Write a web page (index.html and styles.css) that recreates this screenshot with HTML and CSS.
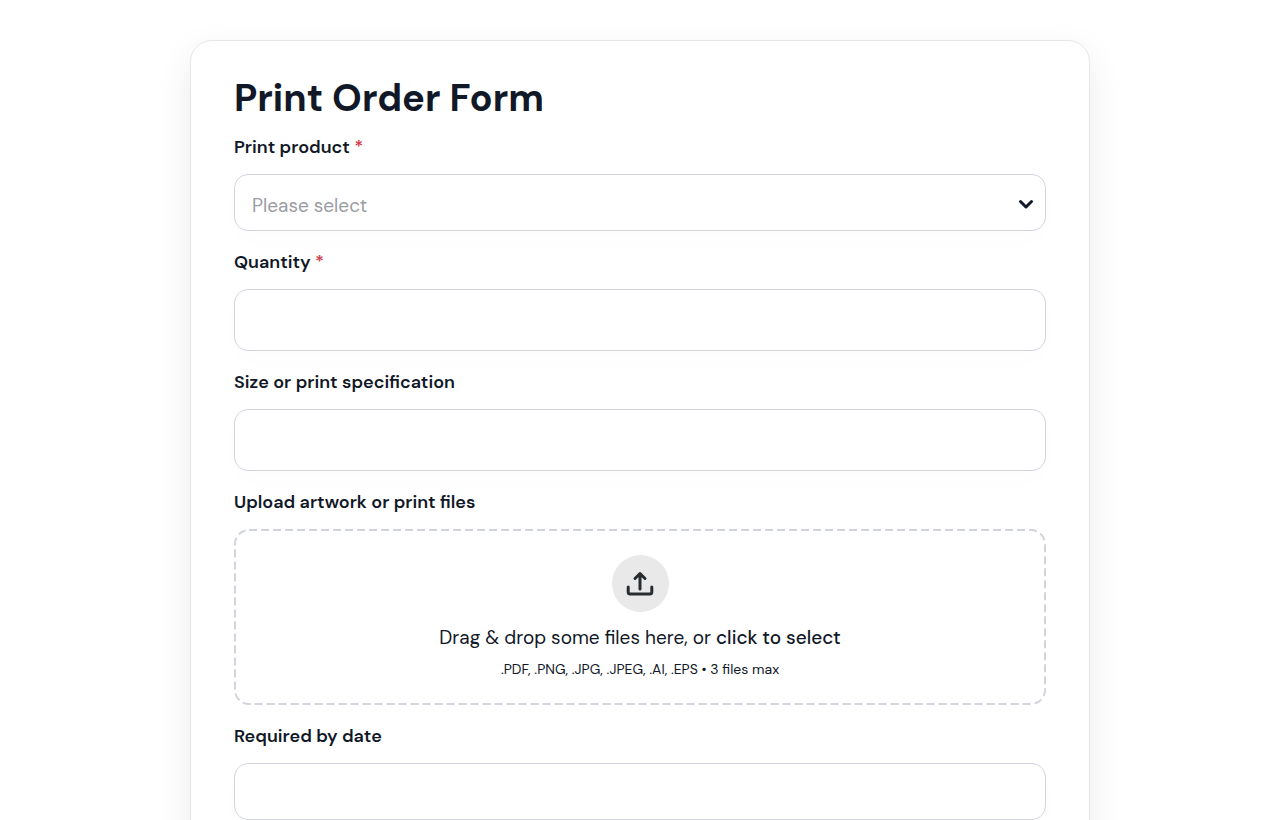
FILE: index.html
```html
<!DOCTYPE html>
<html lang="en">
<head>
  <meta charset="UTF-8" />
  <meta name="viewport" content="width=device-width, initial-scale=1" />
  <title>Print Order Form</title>
  <link rel="stylesheet" href="styles.css">
</head>
<body>
  <form class="card">
    <h1>Print Order Form</h1>

    <div class="field">
      <label for="product">Print product <span class="required">*</span></label>
      <div class="select-wrap">
        <select id="product" class="control" required>
          <option value="">Please select</option>
        </select>
        <svg class="chevron" viewBox="0 0 16 16" aria-hidden="true">
          <path d="M2.500 5.500 8 11l5.500-5.500" />
        </svg>
      </div>
    </div>

    <div class="field">
      <label for="quantity">Quantity <span class="required">*</span></label>
      <input type="text" id="quantity" class="control tall" required />
    </div>

    <div class="field">
      <label for="size">Size or print specification</label>
      <input type="text" id="size" class="control tall" />
    </div>

    <div class="field">
      <label for="files">Upload artwork or print files</label>
      <div class="dropzone">
        <svg class="dashes" aria-hidden="true"><rect x="1" y="1" rx="14" /></svg>
        <span class="upload-icon">
          <svg viewBox="0 0 28 28" aria-hidden="true">
            <path d="M14 19V4M9 8.500l5-5 5 5M2.200 17v5q0 2 2 2h19.600q2 0 2-2v-5" />
          </svg>
        </span>
        <p class="drop-text">Drag &amp; drop some files here, or <b>click to select</b></p>
        <p class="drop-hint">.PDF, .PNG, .JPG, .JPEG, .AI, .EPS • 3 files max</p>
        <input type="file" id="files" accept=".pdf,.png,.jpg,.jpeg,.ai,.eps" multiple />
      </div>
    </div>

    <div class="field">
      <label for="date">Required by date</label>
      <input type="text" id="date" class="control" />
    </div>
  </form>
</body>
</html>
```
FILE: styles.css
```css
* {
  box-sizing: border-box;
}
body {
  margin: 0;
  padding: 40px 24px;
  background: #fff;
  color: #111827;
  font-family: "DM Sans", Inter, sans-serif;
}
.card {
  max-width: 900px;
  margin: 0 auto;
  padding: 32px 43px 43px;
  border: 1px solid #e5e7eb;
  border-radius: 22px;
  background: #fff;
  box-shadow: 0 12px 36px rgba(0, 0, 0, 0.08);
}
h1 {
  margin: 0;
  font-size: 38px;
  font-weight: 700;
  line-height: 50px;
}
.field {
  display: flex;
  flex-direction: column;
  gap: 15px;
  margin-bottom: 19px;
}
h1 + .field {
  margin-top: 12px;
}
label {
  font-size: 18px;
  font-weight: 600;
  line-height: 24px;
}
.required {
  color: #d63a4a;
}
.control {
  display: block;
  width: 100%;
  height: 57px;
  padding: 6px 17px 0;
  border: 1px solid #d1d5db;
  border-radius: 14px;
  background: #fff;
  box-shadow: 0 10px 28px rgba(16, 100, 60, 0.01);
  color: #111827;
  font: inherit;
  font-size: 19px;
}
.control.tall {
  height: 62px;
}
.select-wrap {
  position: relative;
}
select.control {
  appearance: none;
  color: #9a9ca3;
}
.chevron {
  position: absolute;
  top: 22px;
  right: 12px;
  width: 16px;
  height: 16px;
  fill: none;
  stroke: #111827;
  stroke-width: 3;
  stroke-linecap: round;
  stroke-linejoin: round;
  pointer-events: none;
}
.dropzone {
  position: relative;
  display: flex;
  flex-direction: column;
  align-items: center;
  padding: 26px 16px 25px;
}
.dashes {
  position: absolute;
  inset: 0;
  width: 100%;
  height: 100%;
}
.dashes rect {
  width: calc(100% - 2px);
  height: calc(100% - 2px);
  fill: none;
  stroke: #d1d5db;
  stroke-width: 2;
  stroke-dasharray: 8 4;
}
.upload-icon {
  display: flex;
  align-items: center;
  justify-content: center;
  width: 57px;
  height: 57px;
  border-radius: 50%;
  background: #e9e9e9;
}
.upload-icon svg {
  width: 28px;
  height: 28px;
  fill: none;
  stroke: #262c2f;
  stroke-width: 3;
  stroke-linecap: round;
  stroke-linejoin: round;
}
.drop-text {
  margin: 12px 0 6px;
  font-size: 19px;
  line-height: 28px;
}
.drop-text b {
  font-weight: 500;
}
.drop-hint {
  margin: 0;
  font-size: 14px;
  line-height: 22px;
}
/* invisible, covers the whole drop area so it stays clickable */
.dropzone input {
  position: absolute;
  inset: 0;
  width: 100%;
  height: 100%;
  opacity: 0;
  cursor: pointer;
}
```
